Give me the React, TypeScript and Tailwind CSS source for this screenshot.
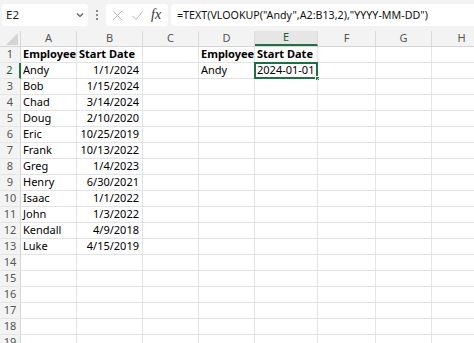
import React from "react";

const cols = ["A", "B", "C", "D", "E", "F", "G", "H"];
const widths = [56, 66, 56, 56, 63, 58, 56, 60];

const data: [string, string][] = [
  ["Andy", "1/1/2024"],
  ["Bob", "1/15/2024"],
  ["Chad", "3/14/2024"],
  ["Doug", "2/10/2020"],
  ["Eric", "10/25/2019"],
  ["Frank", "10/13/2022"],
  ["Greg", "1/4/2023"],
  ["Henry", "6/30/2021"],
  ["Isaac", "1/1/2022"],
  ["John", "1/3/2022"],
  ["Kendall", "4/9/2018"],
  ["Luke", "4/15/2019"],
];

type Cell = { text: string; bold?: boolean; right?: boolean };

function cellFor(r: number, c: number): Cell {
  if (r === 1) {
    if (c === 0) return { text: "Employee", bold: true };
    if (c === 1) return { text: "Start Date", bold: true };
    if (c === 3) return { text: "Employee", bold: true };
    if (c === 4) return { text: "Start Date", bold: true };
  }
  if (r >= 2 && r <= 13) {
    const d = data[r - 2];
    if (c === 0) return { text: d[0] };
    if (c === 1) return { text: d[1], right: true };
  }
  if (r === 2) {
    if (c === 3) return { text: "Andy" };
    if (c === 4) return { text: "2024-01-01" };
  }
  return { text: "" };
}

export default function App() {
  const rows = Array.from({ length: 19 }, (_, i) => i + 1);
  return (
    <div
      className="w-[474px] h-[343px] overflow-hidden bg-white text-[11px] text-black"
      style={{ fontFamily: '"Noto Sans", "Open Sans", sans-serif' }}
    >
      {/* formula bar */}
      <div className="h-[31px] bg-[#f3f3f3] flex items-center pl-[2px] pb-[1px]">
        <div className="w-[86px] h-[22px] bg-white rounded-[3px] flex items-center justify-between pl-[4px] pr-[3px]">
          <span className="text-[11.5px] text-[#222]">E2</span>
          <svg width="10" height="10" viewBox="0 0 10 10">
            <path d="M2 3.5 L5 6.5 L8 3.5" fill="none" stroke="#555" strokeWidth="1.1" />
          </svg>
        </div>
        <div className="w-[18px] flex flex-col items-center justify-center gap-[2px]">
          <span className="w-[2px] h-[2px] bg-[#666] rounded-full" />
          <span className="w-[2px] h-[2px] bg-[#666] rounded-full" />
          <span className="w-[2px] h-[2px] bg-[#666] rounded-full" />
        </div>
        <div className="w-[62px] h-[22px] bg-white rounded-[3px] flex items-center pl-[5px] gap-[7px]">
          <svg width="13" height="13" viewBox="0 0 13 13">
            <path d="M2 2 L11 11 M11 2 L2 11" stroke="#b9b9b9" strokeWidth="1" fill="none" />
          </svg>
          <svg width="13" height="13" viewBox="0 0 13 13">
            <path d="M1.5 7 L5 10.5 L11.5 2.5" stroke="#b9b9b9" strokeWidth="1" fill="none" />
          </svg>
          <span
            className="italic text-[14px] text-[#333] leading-none"
            style={{ fontFamily: '"Liberation Serif", "DejaVu Serif", serif' }}
          >
            fx
          </span>
        </div>
        <div className="ml-[3px] flex-1 h-[22px] bg-white rounded-l-[3px] flex items-center pl-[6px] text-[10.7px] text-[#111] whitespace-nowrap">
          =TEXT(VLOOKUP("Andy",A2:B13,2),"YYYY-MM-DD")
        </div>
      </div>

      {/* grid */}
      <div className="flex flex-col">
        <div className="flex h-[16px] bg-[#f3f3f3] border-b border-[#d6d6d6]">
          <div className="w-[21px] shrink-0 relative border-r border-[#d6d6d6]">
            <svg width="12" height="12" viewBox="0 0 12 12" className="absolute right-[2px] bottom-[1px]">
              <path d="M12 0 L12 12 L0 12 Z" fill="#d4d4d4" />
            </svg>
          </div>
          {cols.map((c, i) => (
            <div
              key={c}
              className={
                "shrink-0 flex items-center justify-center border-r border-[#dcdcdc] text-[11px] " +
                (c === "E"
                  ? "bg-[#e6e6e6] text-[#1f5c36] border-b-2 border-b-[#1e7145]"
                  : "text-[#555]")
              }
              style={{ width: widths[i] }}
            >
              {c}
            </div>
          ))}
        </div>
        {rows.map((r) => (
          <div key={r} className="flex h-[16px] shrink-0">
            <div
              className={
                "w-[21px] shrink-0 flex items-center justify-center bg-[#f3f3f3] text-[11px] border-b border-[#e6e6e6] " +
                (r === 2
                  ? "bg-[#e6e6e6] text-[#1f5c36] border-r-2 border-r-[#1e7145]"
                  : "text-[#555] border-r border-r-[#d6d6d6]")
              }
            >
              {r}
            </div>
            {cols.map((c, ci) => {
              const cell = cellFor(r, ci);
              const sel = r === 2 && ci === 4;
              return (
                <div
                  key={c}
                  className={
                    "shrink-0 relative flex items-center whitespace-nowrap overflow-visible border-r border-b border-[#e3e3e3] " +
                    (cell.right ? "justify-end pr-[3px] " : "pl-[2px] ") +
                    (cell.bold ? "font-bold " : "")
                  }
                  style={{ width: widths[ci] }}
                >
                  {cell.text}
                  {sel && (
                    <>
                      <div className="absolute left-[-1px] top-[-1px] right-[-1px] bottom-[-1px] border-2 border-[#1e7145] pointer-events-none" />
                      <div className="absolute right-[-3px] bottom-[-3px] w-[5px] h-[5px] bg-[#1e7145] border border-white" />
                    </>
                  )}
                </div>
              );
            })}
          </div>
        ))}
      </div>
    </div>
  );
}
